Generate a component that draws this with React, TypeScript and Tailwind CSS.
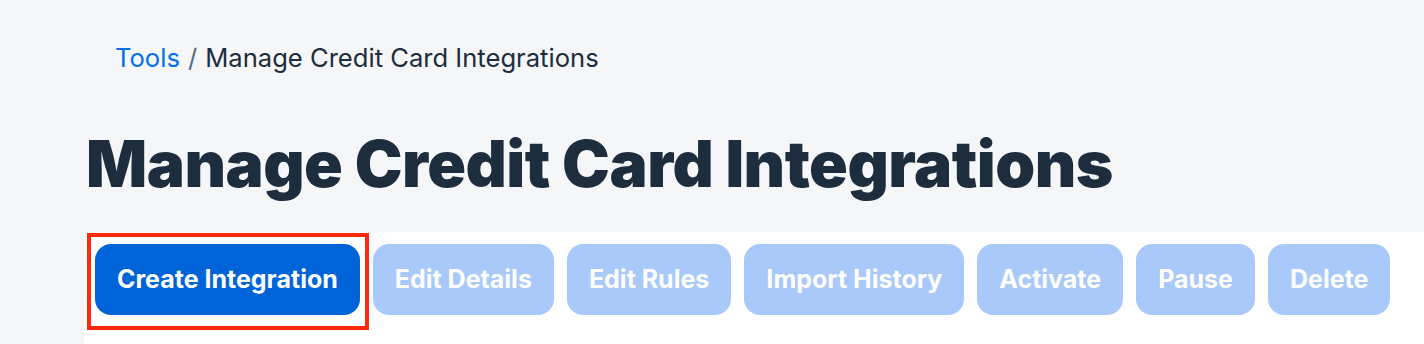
import React from "react";

const buttons = ["Edit Details", "Edit Rules", "Import History", "Activate", "Pause", "Delete"];

export default function App() {
  return (
    <div
      className="w-[1424px] h-[344px] bg-[#f5f6f7] overflow-hidden flex flex-col"
      style={{ fontFamily: "Inter, 'Noto Sans', sans-serif" }}
    >
      <div className="pl-[115px] pt-[42px] text-[25.6px] leading-[32px] text-[#1d2d3e] flex items-center">
        <span className="text-[#0070f2]">Tools</span>
        <span className="text-[#556b82] mx-[8px]">/</span>
        <span>Manage Credit Card Integrations</span>
      </div>
      <h1 className="pl-[86px] mt-[52px] text-[64px] leading-[76px] font-black text-[#1d2d3e] tracking-[-0.5px]">
        Manage Credit Card Integrations
      </h1>
      <div className="ml-[84px] mt-[30px] bg-white flex-1 pt-[12px] pl-[11px] flex items-start gap-[13px]">
        <div className="relative">
          <button className="h-[71px] px-[22px] rounded-[16px] bg-[#0064d9] text-white text-[25px] font-bold">
            Create Integration
          </button>
          <div className="absolute left-[-8px] top-[-11px] w-[282px] h-[97px] border-[4px] border-[#ff2a0a] pointer-events-none" />
        </div>
        {buttons.map((b) => (
          <button
            key={b}
            className="h-[71px] px-[22px] rounded-[16px] bg-[#a9c9fa] text-white text-[25px] font-bold"
          >
            {b}
          </button>
        ))}
      </div>
    </div>
  );
}
